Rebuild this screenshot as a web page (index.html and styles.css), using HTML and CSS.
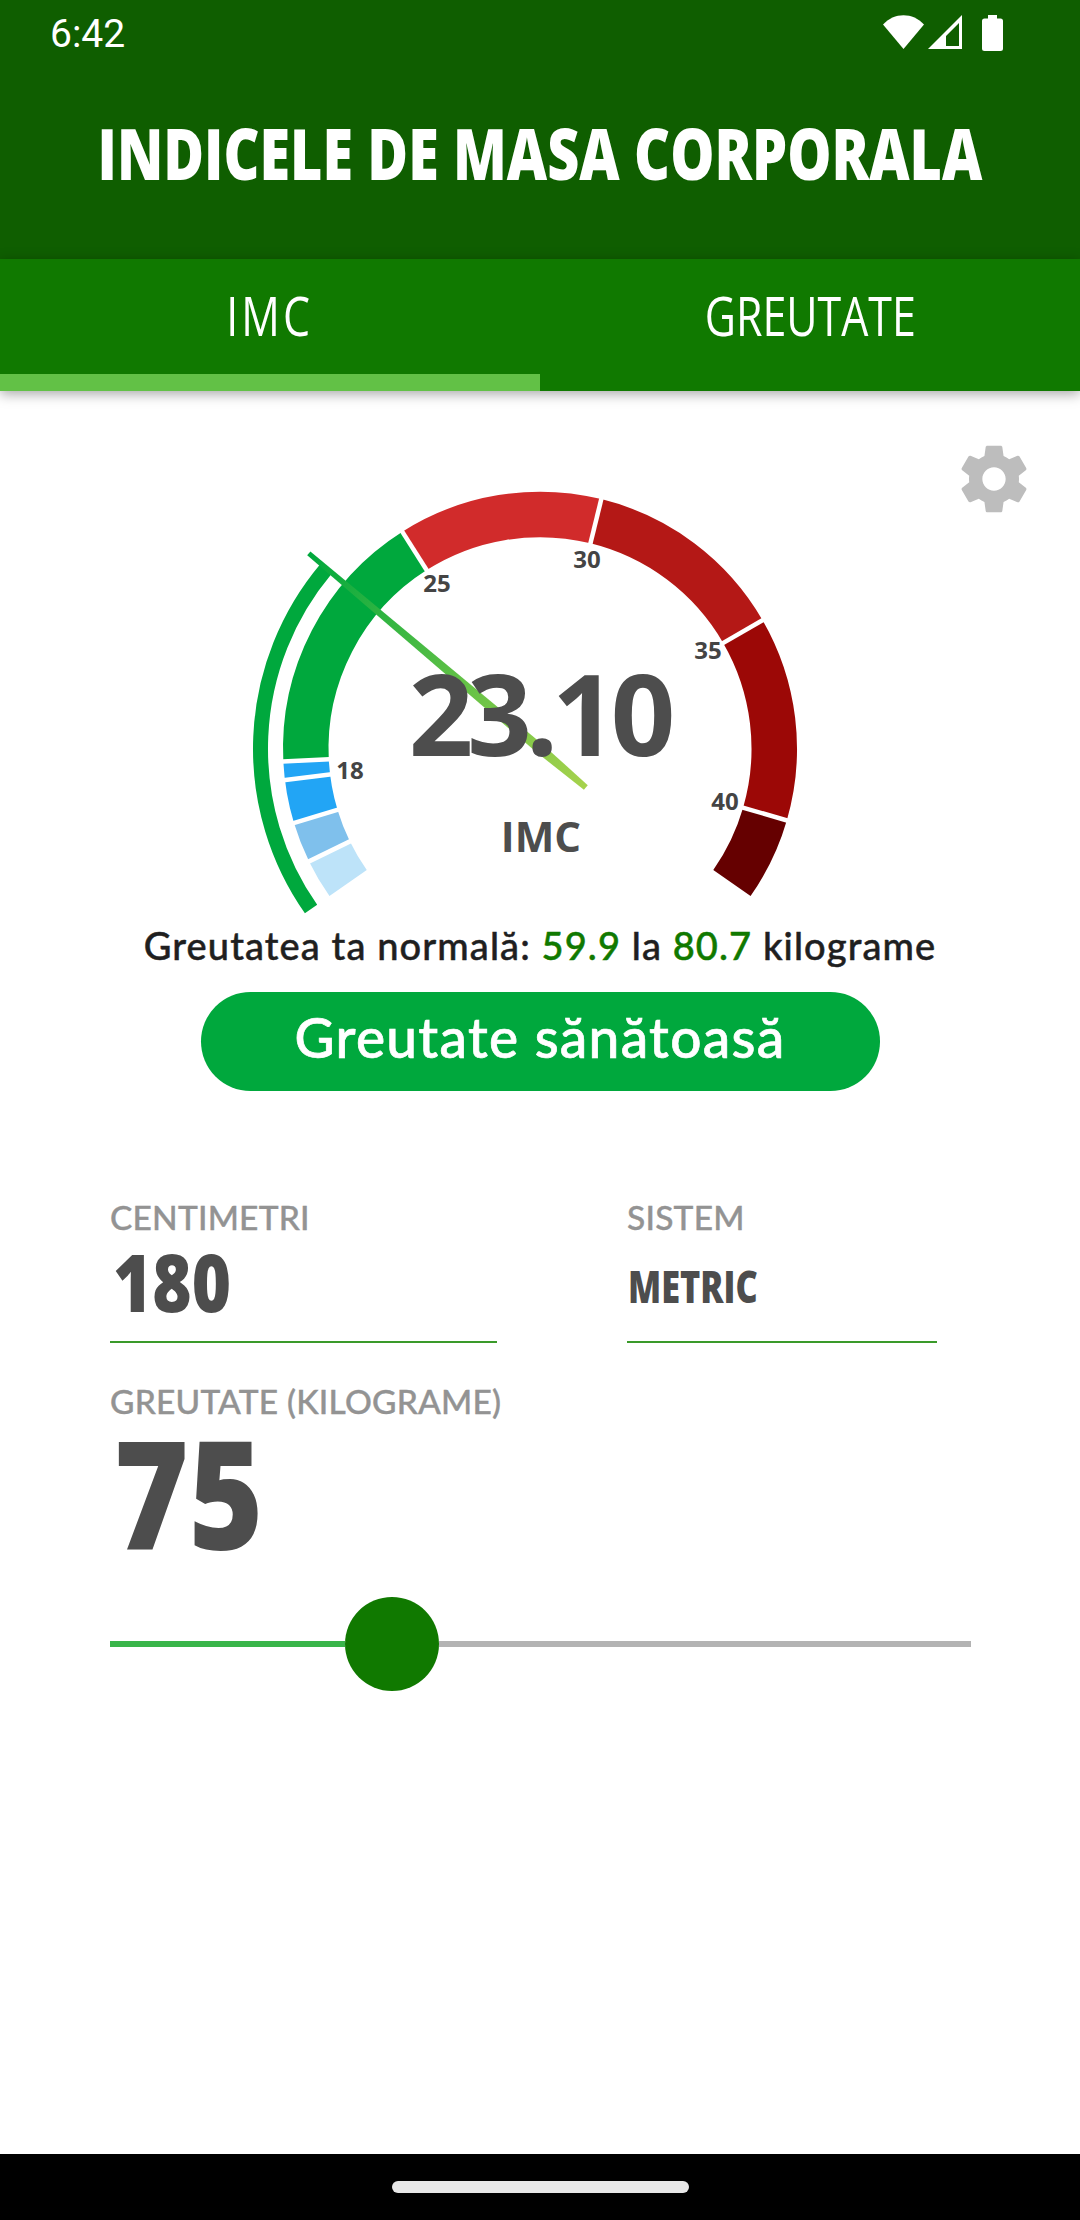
FILE: index.html
```html
<!DOCTYPE html>
<html>

<head>
    <meta http-equiv="Content-Type" content="text/html; charset=utf-8" />
    <title>Indicele de masa corporala</title>
    <link rel="stylesheet" href="styles.css">
</head>

<body>
    <header class="appbar">
        <div class="statusbar">
            <span class="clock">6:42</span>
            <div class="status-icons">
                <svg class="ic-wifi" width="41" height="34" viewBox="0 0 41 34">
                    <path d="M0 9.5 C11 -3 30 -3 41 9.5 L20.5 34 Z" fill="#fff" />
                </svg>
                <svg class="ic-signal" width="34" height="34" viewBox="0 0 34 34">
                    <path d="M0 34 L34 0 L34 34 Z M18 31 L31 31 L31 8 L18 21 Z" fill="#fff" fill-rule="evenodd" />
                </svg>
                <svg class="ic-battery" width="21" height="36" viewBox="0 0 21 36">
                    <path d="M6 0 H15 V3.5 H18.5 Q21 3.5 21 6 V33.5 Q21 36 18.5 36 H2.5 Q0 36 0 33.5 V6 Q0 3.5 2.5 3.5 H6 Z" fill="#fff" />
                </svg>
            </div>
        </div>
        <h1 class="title"><span>INDICELE DE MASA CORPORALA</span></h1>
    </header>

    <nav class="tabs">
        <div class="tab tab-active"><span>IMC</span></div>
        <div class="tab"><span>GREUTATE</span></div>
    </nav>

    <main class="content">
        <svg class="gear" width="80" height="80" viewBox="0 0 24 24">
            <path fill="#bdbdbd" d="M19.43 12.98c.04-.32.07-.64.07-.98s-.03-.66-.07-.98l2.11-1.65c.19-.15.24-.42.12-.64l-2-3.46c-.12-.22-.39-.3-.61-.22l-2.49 1c-.52-.4-1.08-.73-1.69-.98l-.38-2.65C14.46 2.18 14.25 2 14 2h-4c-.25 0-.46.18-.49.42l-.38 2.65c-.61.25-1.17.59-1.69.98l-2.49-1c-.23-.09-.49 0-.61.22l-2 3.46c-.13.22-.07.49.12.64l2.11 1.65c-.04.32-.07.65-.07.98s.03.66.07.98l-2.11 1.65c-.19.15-.24.42-.12.64l2 3.46c.12.22.39.3.61.22l2.49-1c.52.4 1.08.73 1.69.98l.38 2.65c.03.24.24.42.49.42h4c.25 0 .46-.18.49-.42l.38-2.65c.61-.25 1.17-.59 1.69-.98l2.49 1c.23.09.49 0 .61-.22l2-3.46c.12-.22.07-.49-.12-.64l-2.11-1.65zM12 15.5c-1.93 0-3.5-1.57-3.5-3.5s1.57-3.5 3.5-3.5 3.5 1.57 3.5 3.5-1.57 3.5-3.5 3.5z" />
        </svg>

        <svg class="gauge" width="640" height="450" viewBox="220 470 640 450">
            <defs>
                <linearGradient id="needleFill" gradientUnits="userSpaceOnUse" x1="0" y1="808" x2="0" y2="446">
                    <stop offset="0" stop-color="#a6d24c" />
                    <stop offset="0.45" stop-color="#62c146" />
                    <stop offset="1" stop-color="#00a83d" />
                </linearGradient>
            </defs>

            <!-- band: pathLength 360 so dash lengths are degrees -->
            <g class="band">
                <circle cx="540" cy="748.7" r="234.25" pathLength="360" stroke="#bde3f9" stroke-dasharray="9 360" transform="rotate(-215 540 748.7)" />
                <circle cx="540" cy="748.7" r="234.25" pathLength="360" stroke="#7fc0ec" stroke-dasharray="9.2 360" transform="rotate(-206 540 748.7)" />
                <circle cx="540" cy="748.7" r="234.25" pathLength="360" stroke="#22a5f5" stroke-dasharray="14 360" transform="rotate(-196.8 540 748.7)" />
                <circle cx="540" cy="748.7" r="234.25" pathLength="360" stroke="#00a83d" stroke-dasharray="60.45 360" transform="rotate(-182.85 540 748.7)" />
                <circle cx="540" cy="748.7" r="234.25" pathLength="360" stroke="#d12b2b" stroke-dasharray="46.2 360" transform="rotate(-122.4 540 748.7)" />
                <circle cx="540" cy="748.7" r="234.25" pathLength="360" stroke="#b41816" stroke-dasharray="46.2 360" transform="rotate(-76.2 540 748.7)" />
                <circle cx="540" cy="748.7" r="234.25" pathLength="360" stroke="#9c0806" stroke-dasharray="46.2 360" transform="rotate(-30 540 748.7)" />
                <circle cx="540" cy="748.7" r="234.25" pathLength="360" stroke="#650000" stroke-dasharray="18.8 360" transform="rotate(16.2 540 748.7)" />
            </g>
            <g class="band-gaps">
                <line x1="540" y1="486" x2="540" y2="543" transform="rotate(-116 540 748.7)" />
                <line x1="540" y1="486" x2="540" y2="543" transform="rotate(-106.8 540 748.7)" />
                <line x1="540" y1="486" x2="540" y2="543" transform="rotate(-97 540 748.7)" />
                <line x1="540" y1="486" x2="540" y2="543" transform="rotate(-92.85 540 748.7)" />
                <line x1="540" y1="486" x2="540" y2="543" transform="rotate(-32.4 540 748.7)" />
                <line x1="540" y1="486" x2="540" y2="543" transform="rotate(13.8 540 748.7)" />
                <line x1="540" y1="486" x2="540" y2="543" transform="rotate(60 540 748.7)" />
                <line x1="540" y1="486" x2="540" y2="543" transform="rotate(106.2 540 748.7)" />
            </g>
            <circle class="healthy-arc" cx="540" cy="748.7" r="279.5" pathLength="360" stroke-dasharray="75 360" transform="rotate(-215 540 748.7)" />

            <polygon points="537.5,446 542.5,446 545,748.7 543,808.7 537,808.7 535,748.7" fill="url(#needleFill)" transform="rotate(-49.8 540 748.7)" />

            <text class="tick" x="350" y="779">18</text>
            <text class="tick" x="437" y="592">25</text>
            <text class="tick" x="587" y="568">30</text>
            <text class="tick" x="708" y="659">35</text>
            <text class="tick" x="725" y="810">40</text>
            <text class="value" x="539" y="756">23.10</text>
            <text class="unit" x="541" y="852">IMC</text>
        </svg>

        <p class="normal-range">Greutatea ta normală: <b>59.9</b> la <b>80.7</b> kilograme</p>
        <div class="status-pill">Greutate sănătoasă</div>

        <div class="field-row">
            <div class="field field-height">
                <label>CENTIMETRI</label>
                <div class="field-value"><span>180</span></div>
            </div>
            <div class="field field-system">
                <label>SISTEM</label>
                <div class="field-value field-value-small"><span>METRIC</span></div>
            </div>
        </div>

        <div class="weight">
            <label>GREUTATE (KILOGRAME)</label>
            <div class="weight-value"><span>75</span></div>
        </div>

        <div class="slider">
            <div class="slider-fill"></div>
            <div class="slider-thumb"></div>
            <div class="slider-rest"></div>
        </div>
    </main>

    <footer class="navbar">
        <div class="nav-pill"></div>
    </footer>
</body>

</html>
```
FILE: styles.css
```css
html,
body {
    width: 1080px;
    height: 2220px;
    margin: 0;
    padding: 0;
    overflow: hidden;
}

body {
    display: flex;
    flex-direction: column;
    background-color: #fff;
    font-family: Lato, "Noto Sans", sans-serif;
}

.appbar {
    height: 259px;
    background-color: #0f5e00;
    color: #fff;
}

.statusbar {
    display: flex;
    justify-content: space-between;
    align-items: flex-start;
    height: 66px;
    padding: 0 77px 0 50px;
}

.clock {
    font-family: Roboto, sans-serif;
    font-size: 39px;
    line-height: 68px;
}

.status-icons {
    display: flex;
    gap: 4px;
    padding-top: 15px;
}

.ic-battery {
    margin-left: 16px;
}

.title {
    display: flex;
    justify-content: center;
    margin: 0;
    font-family: "Open Sans", sans-serif;
    font-size: 71px;
    line-height: 174px;
    font-weight: 800;
    white-space: nowrap;
}

.title span {
    flex: none;
    transform: scaleX(0.783);
}

.tabs {
    display: flex;
    height: 132px;
    background-color: #107900;
    color: #fff;
    box-shadow: 0 3px 12px rgba(0, 0, 0, 0.35);
    position: relative;
    z-index: 1;
}

.tab {
    flex: 1;
    box-sizing: border-box;
    height: 132px;
    font-family: "Open Sans", sans-serif;
    font-size: 55px;
    line-height: 112px;
    text-align: center;
}

.tab span {
    display: inline-block;
    transform: scaleX(0.78);
}

.tab-active {
    border-bottom: 17px solid #62c146;
}

.tab-active span {
    letter-spacing: 4px;
}

.content {
    flex: 1;
    position: relative;
    display: flex;
    flex-direction: column;
    align-items: center;
}

.gear {
    position: absolute;
    top: 48px;
    right: 46px;
}

.gauge {
    display: block;
    margin-top: 79px;
}

.band circle,
.healthy-arc {
    fill: none;
}

.band circle {
    stroke-width: 45.5;
}

.band-gaps line {
    stroke: #fff;
    stroke-width: 4.5;
}

.healthy-arc {
    stroke: #00a83d;
    stroke-width: 15;
}

.gauge text {
    font-family: "Open Sans", sans-serif;
    font-weight: 700;
    text-anchor: middle;
    fill: #4d4d4d;
}

.gauge .tick {
    font-size: 24px;
    fill: #444;
}

.gauge .value {
    font-size: 113px;
    letter-spacing: -6px;
}

.gauge .unit {
    font-size: 42px;
}

.normal-range {
    margin: 2px 0 0;
    font-size: 38px;
    line-height: 46px;
    letter-spacing: 1.1px;
    font-weight: 500;
    -webkit-text-stroke: 0.5px currentColor;
    color: #1f1f1f;
    white-space: nowrap;
}

.normal-range b {
    font-weight: 500;
    color: #107900;
}

.status-pill {
    box-sizing: border-box;
    width: 679px;
    height: 99px;
    margin-top: 24px;
    border-radius: 50px;
    background-color: #00a83d;
    color: #fff;
    font-size: 55px;
    font-weight: 500;
    letter-spacing: 1.3px;
    -webkit-text-stroke: 0.7px #fff;
    line-height: 90px;
    text-align: center;
}

.field-row {
    align-self: stretch;
    display: flex;
    margin: 106px 0 0 110px;
}

label {
    display: block;
    font-size: 33.5px;
    line-height: 40px;
    letter-spacing: 0.2px;
    font-weight: 500;
    -webkit-text-stroke: 0.4px currentColor;
    color: #939393;
    white-space: nowrap;
}

.field-height {
    width: 387px;
    margin-right: 130px;
}

.field-system {
    width: 310px;
}

.field-value {
    box-sizing: border-box;
    height: 106px;
    padding-left: 3px;
    border-bottom: 2px solid #3a9a2a;
    font-family: "Open Sans", sans-serif;
    font-size: 79px;
    font-weight: 800;
    line-height: 90px;
    color: #4d4d4d;
}

.field-value span,
.weight-value span {
    display: inline-block;
    transform: scaleX(0.85);
    transform-origin: left center;
}

.field-value-small {
    padding-left: 1px;
    font-size: 44px;
    line-height: 98px;
}

.field-value-small span {
    transform: scaleX(0.78);
}

.weight {
    align-self: stretch;
    margin: 38px 0 0 110px;
}

.weight-value {
    height: 170px;
    padding-left: 4px;
    font-family: "Open Sans", sans-serif;
    font-size: 150px;
    font-weight: 800;
    line-height: 142px;
    color: #4d4d4d;
}

.slider {
    align-self: flex-start;
    display: flex;
    align-items: center;
    width: 861px;
    height: 94px;
    margin: 6px 0 0 110px;
}

.slider-fill {
    width: 235px;
    height: 6px;
    background-color: #39b54a;
}

.slider-thumb {
    width: 94px;
    height: 94px;
    border-radius: 50%;
    background-color: #107900;
}

.slider-rest {
    flex: 1;
    height: 6px;
    background-color: #b3b3b3;
}

.navbar {
    display: flex;
    justify-content: center;
    height: 66px;
    background-color: #000;
}

.nav-pill {
    width: 297px;
    height: 12px;
    margin-top: 27px;
    border-radius: 6px;
    background-color: #e8e8e8;
}
```
